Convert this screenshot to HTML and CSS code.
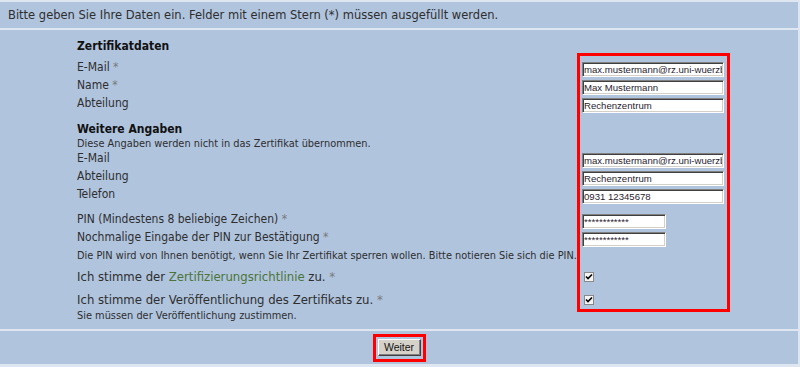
FILE: index.html
```html
<!DOCTYPE html>
<html lang="de">
  <head>
    <meta charset="UTF-8" />
    <meta name="viewport" content="width=device-width, initial-scale=1.0" />
    <title>Zertifikat beantragen</title>
    <link rel="stylesheet" href="styles.css">
  </head>
  <body>
    <div class="page">
      <div class="notice">
        Bitte geben Sie Ihre Daten ein. Felder mit einem Stern (*) müssen ausgefüllt werden.
      </div>
      <form class="main" onsubmit="return false;">
        <div class="form">
          <h2 class="section-title">Zertifikatdaten</h2>
          <div class="row">
            <label for="email">E-Mail <span class="req">*</span></label>
            <div class="field"><input id="email" class="text" type="text" value="max.mustermann@rz.uni-wuerzburg.de" /></div>
          </div>
          <div class="row">
            <label for="name">Name <span class="req">*</span></label>
            <div class="field"><input id="name" class="text" type="text" value="Max Mustermann" /></div>
          </div>
          <div class="row">
            <label for="dept">Abteilung</label>
            <div class="field"><input id="dept" class="text" type="text" value="Rechenzentrum" /></div>
          </div>

          <h2 class="section-title second">Weitere Angaben</h2>
          <p class="hint">Diese Angaben werden nicht in das Zertifikat übernommen.</p>
          <div class="row">
            <label for="email2">E-Mail</label>
            <div class="field"><input id="email2" class="text" type="text" value="max.mustermann@rz.uni-wuerzburg.de" /></div>
          </div>
          <div class="row">
            <label for="dept2">Abteilung</label>
            <div class="field"><input id="dept2" class="text" type="text" value="Rechenzentrum" /></div>
          </div>
          <div class="row">
            <label for="phone">Telefon</label>
            <div class="field"><input id="phone" class="text" type="text" value="0931 12345678" /></div>
          </div>

          <div class="row pin-first">
            <label for="pin">PIN (Mindestens 8 beliebige Zeichen) <span class="req">*</span></label>
            <div class="field"><input id="pin" class="text short" type="text" value="************" /></div>
          </div>
          <div class="row">
            <label for="pin2">Nochmalige Eingabe der PIN zur Bestätigung <span class="req">*</span></label>
            <div class="field"><input id="pin2" class="text short" type="text" value="************" /></div>
          </div>
          <p class="hint pin-hint">Die PIN wird von Ihnen benötigt, wenn Sie Ihr Zertifikat sperren wollen. Bitte notieren Sie sich die PIN.</p>

          <div class="row check first-check">
            <label>Ich stimme der <a href="#" class="link">Zertifizierungsrichtlinie</a> zu. <span class="req">*</span></label>
            <div class="field">
              <span class="checkbox">
                <svg width="10" height="10" viewBox="0 0 10 10">
                  <rect x="0.5" y="0.5" width="9" height="9" fill="#f4f4f4" stroke="#8a8a8a" />
                  <path d="M2 4.5 L4 6.5 L8 2.5" fill="none" stroke="#000" stroke-width="1.6" />
                </svg>
              </span>
            </div>
          </div>
          <div class="row check">
            <label>Ich stimme der Veröffentlichung des Zertifikats zu. <span class="req">*</span></label>
            <div class="field">
              <span class="checkbox">
                <svg width="10" height="10" viewBox="0 0 10 10">
                  <rect x="0.5" y="0.5" width="9" height="9" fill="#f4f4f4" stroke="#8a8a8a" />
                  <path d="M2 4.5 L4 6.5 L8 2.5" fill="none" stroke="#000" stroke-width="1.6" />
                </svg>
              </span>
            </div>
          </div>
          <p class="hint">Sie müssen der Veröffentlichung zustimmen.</p>
        </div>
        <div class="highlight"></div>
      </form>
      <div class="actions">
        <span class="button-frame"><button class="button" type="button">Weiter</button></span>
      </div>
    </div>
  </body>
</html>
```

FILE: styles.css
```css
body {
  margin: 0;
  background-color: #dde6f1;
  font-family: "DejaVu Sans Condensed", "DejaVu Sans", sans-serif;
  font-stretch: condensed;
  color: #2e2e2e;
}
.page {
  width: 798px;
  display: flex;
  flex-direction: column;
  gap: 2px;
  padding-top: 2px;
  padding-bottom: 3px;
}
.notice {
  height: 26px;
  line-height: 26px;
  padding-left: 8px;
  font-family: "DejaVu Sans", sans-serif;
  font-stretch: normal;
  font-size: 11.5px;
  background-color: #b0c4de;
}
.main {
  position: relative;
  height: 299px;
  margin: 0;
  background-color: #b0c4de;
}
.form {
  display: flex;
  flex-direction: column;
  padding-left: 77px;
}
.section-title {
  margin: 8px 0 5px;
  font-size: 12px;
  line-height: 16px;
  font-weight: bold;
  color: #111;
}
.section-title.second {
  margin: 8px 0 0;
}
.hint {
  margin: 0;
  font-family: "DejaVu Sans", sans-serif;
  font-stretch: normal;
  font-size: 9.8px;
  line-height: 13px;
}
.pin-hint {
  margin-top: 2px;
}
.row {
  display: grid;
  grid-template-columns: 500px 153px;
  height: 18px;
  font-size: 12px;
  line-height: 16px;
}
.row.pin-first {
  margin-top: 7px;
}
.row.check {
  font-size: 13px;
  line-height: 18px;
  margin-top: 5px;
}
.row.first-check {
  margin-top: 6px;
}
.field {
  padding-left: 5px;
  padding-top: 2px;
}
.req {
  color: #7a7a7a;
}
.link {
  color: #4b7436;
  text-decoration: none;
}
.text {
  box-sizing: border-box;
  width: 142px;
  height: 15px;
  margin: 0;
  padding: 0 1px;
  border: 1px solid;
  border-color: #808080 #ffffff #ffffff #808080;
  box-shadow: inset 1px 1px 0 #404040, inset -1px -1px 0 #d4d0c8;
  background-color: #ffffff;
  font-family: "Liberation Sans", Arial, sans-serif;
  font-size: 9.6px;
  color: #2a2230;
  outline: none;
}
.text.short {
  width: 84px;
}
.checkbox {
  display: block;
  width: 10px;
  height: 10px;
  margin: 2px 0 0 2px;
}
.checkbox svg {
  display: block;
}
.highlight {
  position: absolute;
  left: 577px;
  top: 23px;
  width: 153px;
  height: 259px;
  box-sizing: border-box;
  border: 3px solid #ff0000;
  pointer-events: none;
}
.actions {
  height: 33px;
  display: flex;
  justify-content: center;
  align-items: center;
  background-color: #b0c4de;
}
.button-frame {
  display: inline-flex;
  padding: 2px 2px 3px;
  border: 3px solid #ff0000;
}
.button {
  box-sizing: border-box;
  width: 43px;
  height: 17px;
  padding: 0;
  border: 1px solid;
  border-color: #ffffff #404040 #404040 #ffffff;
  box-shadow: inset -1px -1px 0 #808080;
  background-color: #d6d2ca;
  font-family: "Liberation Sans", Arial, sans-serif;
  font-size: 10.5px;
  color: #111;
  cursor: pointer;
}
```
